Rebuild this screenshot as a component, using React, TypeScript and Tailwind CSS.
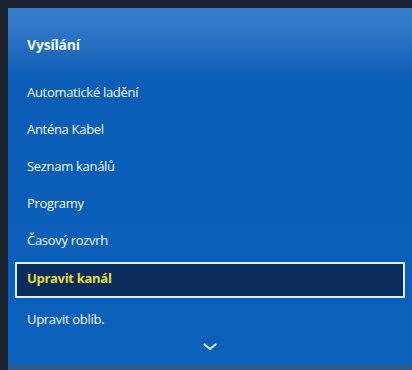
const items = ["Automatické ladění", "Anténa Kabel", "Seznam kanálů", "Programy", "Časový rozvrh"];

function Chevron() {
  return (
    <svg width="14" height="8" viewBox="0 0 14 8" fill="none">
      <path d="M1.5 1.5 L7 6 L12.5 1.5" stroke="#cfe3f7" strokeWidth="2.2" strokeLinecap="round" strokeLinejoin="round" />
    </svg>
  );
}

export default function App() {
  return (
    <div
      className="w-[412px] h-[370px] bg-[#1a232e] pt-2 pl-2 overflow-hidden"
      style={{ fontFamily: '"Open Sans", "Noto Sans", sans-serif' }}
    >
      <div className="flex flex-col h-[362px] bg-gradient-to-b from-[#3b80cc] via-[#0b5db6] via-20% to-[#0a60bb] text-white border-b-[6px] border-[#2a5b8f]">
        {/* header */}
        <div className="h-[66px] pt-[28px] pl-[19px]">
          <div className="text-[14px] leading-[18px] font-bold tracking-[-0.2px] text-[#eef5fc]">Vysílání</div>
        </div>

        {/* menu */}
        {items.map((item) => (
          <div key={item} className="h-[37px] flex items-center pl-[19px] text-[13px] tracking-[-0.3px] text-[#f2f7fd]">
            {item}
          </div>
        ))}

        <div className="mt-[3px] mx-[7px] h-[36px] flex items-center pl-[10px] border-2 border-[#d7ecf8] bg-[#0b2b5c]">
          <span className="text-[13px] font-bold tracking-[-0.3px] text-[#e2de3e] -mt-[2px]">Upravit kanál</span>
        </div>

        <div className="h-[44px] flex items-center pl-[19px] text-[13px] tracking-[-0.3px] text-[#f2f7fd]">
          Upravit oblíb.
        </div>

        <div className="flex justify-center pt-[1px]">
          <Chevron />
        </div>
      </div>
    </div>
  );
}
